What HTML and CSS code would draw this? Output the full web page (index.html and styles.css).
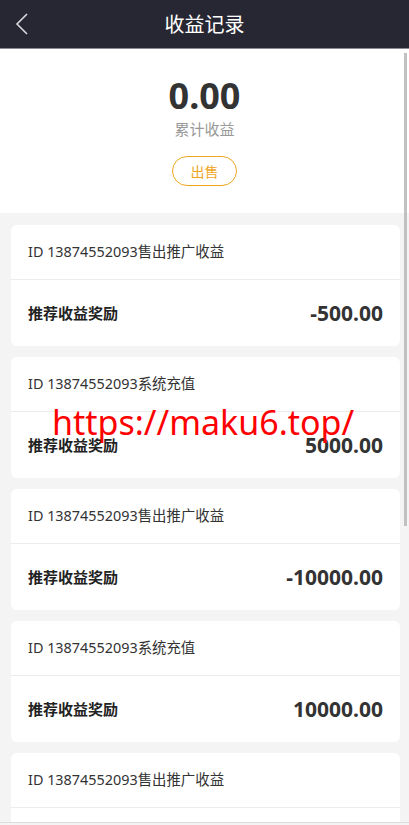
FILE: index.html
```html
<!DOCTYPE html>
<html>
	<head>
		<meta charset="UTF-8">
		<title>收益记录</title>
		<link rel="stylesheet" href="styles.css">
	</head>
	<body>
		<div class="header">
			<a class="back" href="javascript:void(0);">
				<svg width="14" height="22" viewBox="0 0 14 22"><path d="M12 1 L2 11 L12 21" fill="none" stroke="#d8d8de" stroke-width="1.6"/></svg>
			</a>
			<h1>收益记录</h1>
		</div>
		<div class="summary">
			<div class="total">0.00</div>
			<div class="label">累计收益</div>
			<button class="sell">出售</button>
		</div>
		<ul class="records">
			<li class="card">
				<div class="desc">ID 13874552093售出推广收益</div>
				<div class="row"><span class="name">推荐收益奖励</span><span class="amount">-500.00</span></div>
			</li>
			<li class="card">
				<div class="desc">ID 13874552093系统充值</div>
				<div class="row"><span class="name">推荐收益奖励</span><span class="amount">5000.00</span></div>
			</li>
			<li class="card">
				<div class="desc">ID 13874552093售出推广收益</div>
				<div class="row"><span class="name">推荐收益奖励</span><span class="amount">-10000.00</span></div>
			</li>
			<li class="card">
				<div class="desc">ID 13874552093系统充值</div>
				<div class="row"><span class="name">推荐收益奖励</span><span class="amount">10000.00</span></div>
			</li>
			<li class="card">
				<div class="desc">ID 13874552093售出推广收益</div>
				<div class="row"><span class="name">推荐收益奖励</span><span class="amount">-500.00</span></div>
			</li>
		</ul>
		<div class="watermark">https://maku6.top/</div>
		<div class="thumb"></div>
		<div class="bottom-line"></div>
	</body>
</html>
```
FILE: styles.css
```css
* {
	box-sizing: border-box;
}
html, body {
	margin: 0;
	padding: 0;
	height: 825px;
	overflow: hidden;
}
body {
	background-color: #f4f4f4;
	font-family: "Noto Sans", "Noto Sans CJK SC", sans-serif;
	color: #333;
}
.header {
	position: relative;
	height: 49px;
	background-color: #272733;
	border-bottom: 1px solid #8a8a92;
	display: flex;
	align-items: center;
	justify-content: center;
}
.header h1 {
	margin: 0;
	font: 20px/1 "Noto Sans CJK SC", sans-serif;
	color: #fff;
}
.back {
	position: absolute;
	left: 15px;
	top: 13px;
	display: block;
	width: 14px;
	height: 22px;
}
.back svg {
	display: block;
}
.summary {
	background-color: #fff;
	height: 164px;
	display: flex;
	flex-direction: column;
	align-items: center;
	padding-top: 26px;
}
.total {
	font: bold 36px/42px "Noto Sans", sans-serif;
	color: #333;
}
.label {
	margin-top: 2px;
	font: 15px/20px "Noto Sans CJK SC", sans-serif;
	color: #999;
}
.sell {
	margin-top: 17px;
	width: 65px;
	height: 30px;
	border: 1px solid #f0a51e;
	border-radius: 15px;
	background: #fff;
	color: #f0a51e;
	font: 14px/1 "Noto Sans CJK SC", sans-serif;
	padding: 0;
}
.records {
	list-style: none;
	margin: 0;
	padding: 12px 9px 0 11px;
}
.card {
	background-color: #fff;
	border-radius: 6px;
	height: 121px;
	margin-bottom: 11px;
	display: flex;
	flex-direction: column;
}
.desc {
	height: 55px;
	border-bottom: 1px solid #ececec;
	padding: 0 17px;
	display: flex;
	align-items: center;
	font: 14.4px/20px "Noto Sans", "Noto Sans CJK SC", sans-serif;
	color: #333;
}
.row {
	flex: 1;
	padding: 0 17px;
	display: flex;
	align-items: center;
	justify-content: space-between;
}
.name {
	font: bold 15px/20px "Noto Sans CJK SC", sans-serif;
	color: #222;
}
.amount {
	font: bold 21px/24px "Noto Sans", sans-serif;
	color: #333;
}
.watermark {
	position: absolute;
	left: 52px;
	top: 398px;
	font: 34px/48px "Noto Sans", sans-serif;
	color: #ff0000;
	white-space: nowrap;
}
.thumb {
	position: absolute;
	left: 404px;
	top: 53px;
	width: 3px;
	height: 473px;
	background-color: #c1c1c1;
}
.bottom-line {
	position: absolute;
	left: 0;
	right: 0;
	top: 822px;
	height: 3px;
	border-top: 1px solid #dcdcdc;
	background-color: #f4f4f4;
}
```
